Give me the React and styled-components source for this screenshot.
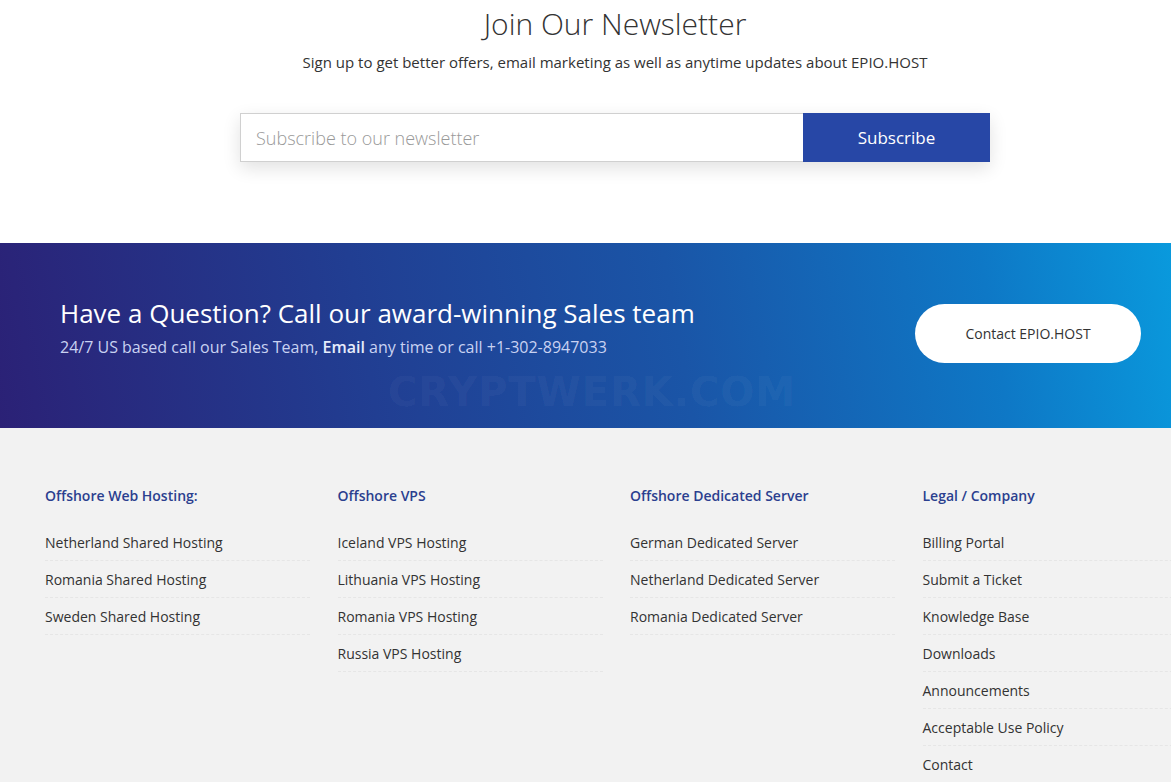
import styled, { createGlobalStyle } from 'styled-components'

const GlobalStyle = createGlobalStyle`
  html, body {
    margin: 0;
    padding: 0;
    overflow: hidden;
    background: #fff;
  }
  body {
    font-family: "Open Sans", "Liberation Sans", sans-serif;
    color: #333;
  }
`

const Page = styled.div`
  width: 1230px;
`

const Newsletter = styled.section`
  display: flex;
  flex-direction: column;
  align-items: center;
  padding: 2px 0 81px;
`

const Heading = styled.h2`
  margin: 0;
  font-size: 30px;
  font-weight: 300;
  line-height: 44px;
  color: #333;
`

const Lead = styled.p`
  margin: 4px 0 0;
  font-size: 15px;
  line-height: 24px;
  color: #333;
`

const SubscribeForm = styled.form`
  display: flex;
  width: 750px;
  height: 49px;
  margin-top: 39px;
  box-shadow: 0 6px 18px rgba(0, 0, 0, 0.12);
`

const EmailInput = styled.input`
  flex: 1;
  border: 1px solid #d0d0d0;
  border-right: none;
  padding: 0 15px;
  font-family: inherit;
  font-size: 18px;
  font-weight: 300;
  color: #333;
  outline: none;

  &::placeholder {
    color: #999;
  }
`

const SubscribeButton = styled.button`
  width: 187px;
  border: none;
  background: #2747a6;
  color: #fff;
  font-family: inherit;
  font-size: 17px;
  cursor: pointer;
`

const Banner = styled.section`
  position: relative;
  height: 185px;
  display: flex;
  align-items: center;
  justify-content: space-between;
  padding: 0 89px 16px 60px;
  box-sizing: border-box;
  background: linear-gradient(80deg, #2b2176 0%, #213e92 30%, #1a55a7 55%, #0e78c6 80%, #08a4e4 100%);
  overflow: hidden;
`

const BannerText = styled.div`
  display: flex;
  flex-direction: column;
`

const BannerTitle = styled.h3`
  margin: 0;
  font-size: 26px;
  font-weight: 500;
  line-height: 36px;
  color: #fff;
`

const BannerSub = styled.p`
  margin: 2px 0 0;
  font-size: 16px;
  line-height: 28px;
  color: #c9d2f2;

  b {
    font-weight: 600;
    color: #e6ebfb;
  }
`

const ContactButton = styled.a`
  display: flex;
  align-items: center;
  justify-content: center;
  width: 226px;
  height: 59px;
  margin-top: 12px;
  border-radius: 30px;
  background: #fff;
  color: #333;
  font-size: 14px;
  text-decoration: none;
`

const Watermark = styled.span`
  position: absolute;
  left: 388px;
  top: 126px;
  font-family: "DejaVu Sans", sans-serif;
  font-size: 40px;
  font-weight: 700;
  letter-spacing: 1px;
  color: rgba(255, 255, 255, 0.05);
  pointer-events: none;
`

const Footer = styled.footer`
  background: #f2f2f2;
  padding: 56px 45px 40px;
  display: grid;
  grid-template-columns: repeat(4, 265px);
  column-gap: 27.5px;
  align-items: start;
  min-height: 400px;
`

const Column = styled.div`
  display: flex;
  flex-direction: column;
`

const ColumnTitle = styled.h4`
  margin: 0 0 16px;
  font-size: 14px;
  font-weight: 600;
  line-height: 24px;
  color: #2b3f8f;
`

const LinkItem = styled.a`
  display: block;
  padding: 9px 0 8px;
  border-bottom: 1px dashed #e6e6e6;
  font-size: 14px;
  line-height: 19px;
  color: #333;
  text-decoration: none;
`

const columns = [
  {
    title: 'Offshore Web Hosting:',
    links: ['Netherland Shared Hosting', 'Romania Shared Hosting', 'Sweden Shared Hosting'],
  },
  {
    title: 'Offshore VPS',
    links: ['Iceland VPS Hosting', 'Lithuania VPS Hosting', 'Romania VPS Hosting', 'Russia VPS Hosting'],
  },
  {
    title: 'Offshore Dedicated Server',
    links: ['German Dedicated Server', 'Netherland Dedicated Server', 'Romania Dedicated Server'],
  },
  {
    title: 'Legal / Company',
    links: [
      'Billing Portal',
      'Submit a Ticket',
      'Knowledge Base',
      'Downloads',
      'Announcements',
      'Acceptable Use Policy',
      'Contact',
    ],
  },
]

const App = () => {
  return (
    <Page>
      <GlobalStyle />
      <Newsletter>
        <Heading>Join Our Newsletter</Heading>
        <Lead>Sign up to get better offers, email marketing as well as anytime updates about EPIO.HOST</Lead>
        <SubscribeForm onSubmit={(e) => e.preventDefault()}>
          <EmailInput type="email" placeholder="Subscribe to our newsletter" />
          <SubscribeButton type="submit">Subscribe</SubscribeButton>
        </SubscribeForm>
      </Newsletter>

      <Banner>
        <BannerText>
          <BannerTitle>Have a Question? Call our award-winning Sales team</BannerTitle>
          <BannerSub>
            24/7 US based call our Sales Team, <b>Email</b> any time or call +1-302-8947033
          </BannerSub>
        </BannerText>
        <ContactButton href="#">Contact EPIO.HOST</ContactButton>
        <Watermark>CRYPTWERK.COM</Watermark>
      </Banner>

      <Footer>
        {columns.map((col) => (
          <Column key={col.title}>
            <ColumnTitle>{col.title}</ColumnTitle>
            {col.links.map((link) => (
              <LinkItem key={link} href="#">{link}</LinkItem>
            ))}
          </Column>
        ))}
      </Footer>
    </Page>
  )
}

export default App
